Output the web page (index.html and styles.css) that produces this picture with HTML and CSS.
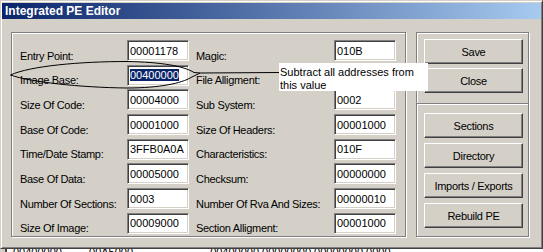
FILE: index.html
```html
<!DOCTYPE html>
<html lang="en">
<head>
    <meta charset="UTF-8">
    <meta name="viewport" content="width=device-width, initial-scale=1.0">
    <title>Integrated PE Editor</title>
    <link rel="stylesheet" href="styles.css">
</head>
<body>
    <div class="window">
        <div class="titlebar">Integrated PE Editor</div>
        <div class="client">
            <div class="group fields">
                <span class="label">Entry Point:</span><span class="field">00001178</span>
                <span class="label">Magic:</span><span class="field">010B</span>

                <span class="label">Image Base:</span><span class="field"><span class="selected">00400000</span></span>
                <span class="label">File Alligment:</span><span class="field"></span>

                <span class="label">Size Of Code:</span><span class="field">00004000</span>
                <span class="label">Sub System:</span><span class="field">0002</span>

                <span class="label">Base Of Code:</span><span class="field">00001000</span>
                <span class="label">Size Of Headers:</span><span class="field">00001000</span>

                <span class="label">Time/Date Stamp:</span><span class="field">3FFB0A0A</span>
                <span class="label">Characteristics:</span><span class="field">010F</span>

                <span class="label">Base Of Data:</span><span class="field">00005000</span>
                <span class="label">Checksum:</span><span class="field">00000000</span>

                <span class="label">Number Of Sections:</span><span class="field">0003</span>
                <span class="label">Number Of Rva And Sizes:</span><span class="field">00000010</span>

                <span class="label">Size Of Image:</span><span class="field">00009000</span>
                <span class="label">Section Alligment:</span><span class="field">00001000</span>
            </div>
            <div class="group actions">
                <div class="stack stack-top">
                    <div class="button">Save</div>
                    <div class="button">Close</div>
                </div>
                <div class="separator"></div>
                <div class="stack stack-bottom">
                    <div class="button">Sections</div>
                    <div class="button">Directory</div>
                    <div class="button">Imports / Exports</div>
                    <div class="button">Rebuild PE</div>
                </div>
            </div>
        </div>
    </div>
    <div class="under">
        <span class="dump dump-a">00400000</span>
        <span class="dump dump-b">00A5000</span>
        <span class="dump dump-c">00400000 00000000 00000000 0000</span>
    </div>

    <!-- hand-drawn note over the dialog -->
    <svg class="annotation" width="543" height="252" viewBox="0 0 543 252">
        <path d="M10.5 75 C 30 66, 80 61.5, 127 61.5 C 160 62, 184 66, 194 72.5" />
        <path d="M10.5 75 C 30 82, 80 87.5, 127 88 C 160 88, 182 83, 191 77.5" />
        <path d="M191 77.5 L 200 73 M194 72.5 L 200 73 L 279 72.5" />
    </svg>
    <div class="callout">Subtract all addresses from<br>this value</div>
</body>
</html>
```

FILE: styles.css
```css
body {
    margin: 0;
    width: 543px;
    height: 252px;
    overflow: hidden;
    background: #d4d0c8;
    font-family: "Liberation Sans", Arial, sans-serif;
    font-size: 11px;
    color: #000;
}
.window {
    box-sizing: border-box;
    width: 543px;
    height: 249px;
    padding: 2px 1px 0 1px;
    border: 1px solid;
    border-color: #d4d0c8 #404040 #404040 #d4d0c8;
    box-shadow: inset 1px 1px #fff, inset -1px -1px #808080;
}
.titlebar {
    height: 16px;
    line-height: 16px;
    padding-left: 3px;
    background: linear-gradient(to right, #0a246a, #a6caf0);
    color: #fff;
    font-weight: bold;
    font-size: 12px;
}
.client {
    display: flex;
    gap: 10px;
    padding: 13px 0 0 9px;
}
.group {
    box-sizing: border-box;
    height: 205px;
    border: 1px solid #808080;
    box-shadow: 1px 1px #fff, inset 1px 1px #fff;
}
.fields {
    width: 395px;
    padding: 7px 0 0 8px;
    display: grid;
    grid-template-columns: 107px 69px 138px 62px;
    grid-template-rows: repeat(8, 21px);
    row-gap: 3.7px;
    align-content: start;
}
.label {
    padding-top: 9.5px;
    line-height: 13px;
    letter-spacing: -0.3px;
    white-space: nowrap;
}
.field {
    box-sizing: border-box;
    width: 62px;
    height: 21px;
    padding: 3.5px 2px 0;
    line-height: 13px;
    background: #fff;
    border: 1px solid;
    border-color: #808080 #fff #fff #808080;
    box-shadow: inset 1px 1px #404040, inset -1px -1px #d4d0c8;
    white-space: nowrap;
    overflow: hidden;
}
.selected {
    background: #0a246a;
    color: #fff;
}
.actions {
    width: 113px;
    padding: 6px 0 0 7px;
}
.stack {
    display: flex;
    flex-direction: column;
}
.stack-top {
    gap: 4px;
}
.stack-bottom {
    gap: 5px;
}
.separator {
    width: 111px;
    margin: 10px 0 8px -7px;
    border-top: 1px solid #808080;
    border-bottom: 1px solid #fff;
}
.button {
    box-sizing: border-box;
    width: 99px;
    height: 25px;
    display: flex;
    align-items: center;
    justify-content: center;
    border: 1px solid;
    border-color: #fff #404040 #404040 #fff;
    box-shadow: inset -1px -1px #808080;
    letter-spacing: -0.3px;
}
.under {
    height: 3px;
    margin-left: 5px;
    border-left: 2px solid #404040;
    background: #fff;
    overflow: hidden;
    white-space: nowrap;
}
.dump {
    display: inline-block;
    margin-top: -3px;
    line-height: 13px;
    vertical-align: top;
}
.dump-a {
    margin-left: 6px;
}
.dump-b {
    margin-left: 24px;
}
.dump-c {
    margin-left: 74px;
}
.annotation {
    position: absolute;
    left: 0;
    top: 0;
    pointer-events: none;
}
.annotation path {
    fill: none;
    stroke: #000;
    stroke-width: 1;
}
.callout {
    position: absolute;
    left: 279px;
    top: 63px;
    box-sizing: border-box;
    width: 149px;
    height: 28px;
    padding: 3px 0 0 1px;
    background: #fff;
    line-height: 12.5px;
    white-space: nowrap;
}
```
